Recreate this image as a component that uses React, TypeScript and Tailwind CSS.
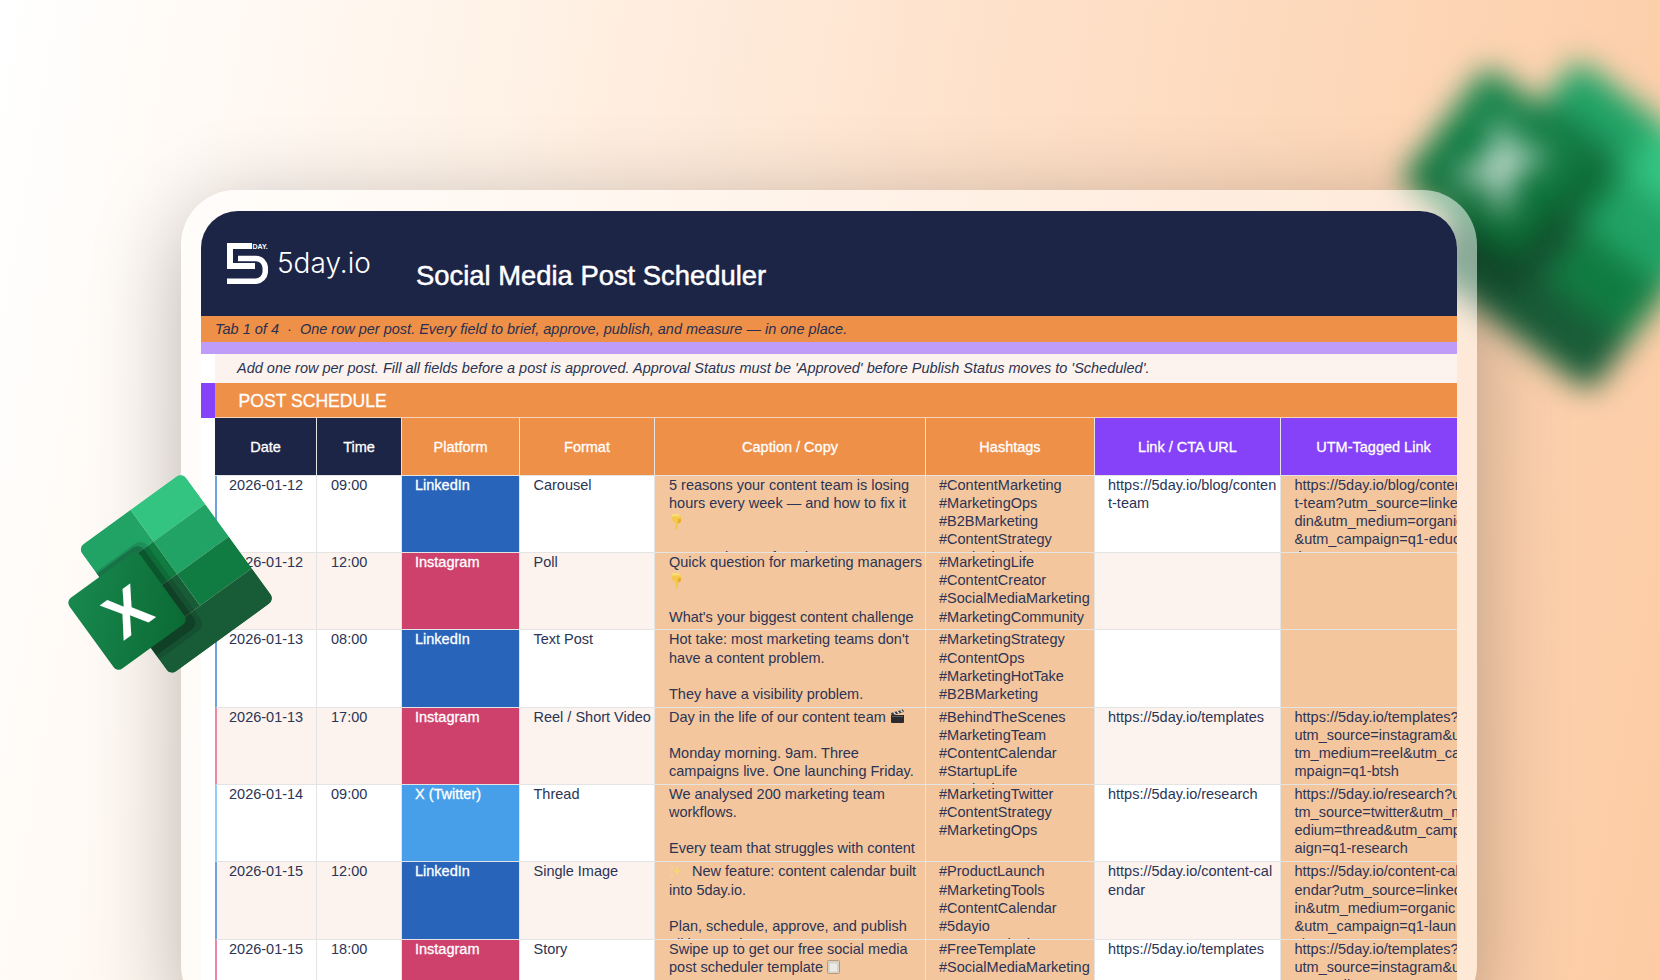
import type { ReactNode } from "react";

const Hand = () => (
  <svg viewBox="0 0 15 17" className="inline-block w-[15px] h-[17px] align-[-4px]">
    <path d="M2.500 1h8l1.500 3v4.500L10 10.500H8.800v4.700a1.200 1.200 0 0 1-2.400 0V10L3.500 8z" fill="#f4c84a" />
    <path d="M2.500 1h8l.5 2.500H3z" fill="#f9dc7c" />
    <path d="M8.800 10.500H10l2-2V6H9z" fill="#e5ab33" />
  </svg>
);

const Clapper = () => (
  <svg viewBox="0 0 15 14" className="inline-block w-[15px] h-[14px] align-[-1px]">
    <path d="M1 6h13v7a1 1 0 0 1-1 1H2a1 1 0 0 1-1-1z" fill="#2b2b2b" />
    <path d="M1 4l12-3.500.8 2.500L1.800 6.500z" fill="#3a3a3a" />
    <path d="M3.500 3.300l2 2M7 2.300l2 2M10.500 1.200l2 2" stroke="#e8e8e8" strokeWidth="1.300" />
    <path d="M2 7.500h11" stroke="#6b6b6b" strokeWidth="0.800" />
  </svg>
);

const Sparkles = () => (
  <svg viewBox="0 0 15 14" className="inline-block w-[15px] h-[14px] align-[-2px]">
    <path d="M8 2l1.300 3.700L13 7 9.300 8.300 8 12 6.700 8.300 3 7l3.700-1.300z" fill="#f7d96b" opacity="0.85" />
    <path d="M3 1l.6 1.400L5 3l-1.400.6L3 5l-.6-1.400L1 3l1.400-.6z" fill="#f9e08a" opacity="0.7" />
    <path d="M3 10l.5 1.500L5 12l-1.500.5L3 14l-.5-1.500L1 12l1.500-.5z" fill="#f9e08a" opacity="0.6" />
  </svg>
);

const Memo = () => (
  <svg viewBox="0 0 13 14" className="inline-block w-[13px] h-[14px] align-[-2px]">
    <rect x="0.500" y="0.500" width="12" height="13" rx="1" fill="#d9d2c6" stroke="#b49a78" />
    <path d="M3 3.500h7v8H3z" fill="#ecebe7" />
  </svg>
);

// the Excel mark, laid out in its own unrotated coordinates
function ExcelMark({ id }: { id: string }) {
  return (
    <>
      <defs>
        <clipPath id={`${id}-sheet`}>
          <rect width="125" height="153" rx="7" />
        </clipPath>
        <linearGradient id={`${id}-front`} x1="0" y1="0" x2="1" y2="1">
          <stop offset="0" stopColor="#18894f" />
          <stop offset="1" stopColor="#0b6a33" />
        </linearGradient>
      </defs>
      <g clipPath={`url(#${id}-sheet)`}>
        <rect width="63" height="38" fill="#21a366" />
        <rect x="63" width="62" height="38" fill="#33c481" />
        <rect y="38" width="63" height="39" fill="#107c41" />
        <rect x="63" y="38" width="62" height="39" fill="#21a366" />
        <rect y="77" width="63" height="38" fill="#185c37" />
        <rect x="63" y="77" width="62" height="38" fill="#107c41" />
        <rect y="115" width="125" height="38" fill="#185c37" />
        <rect x="-44" y="29" width="100" height="105" rx="9" fill="#000" opacity="0.12" />
        <rect x="-44" y="31" width="95" height="98" rx="8" fill="#000" opacity="0.2" />
      </g>
      <rect x="-40" y="35" width="85" height="85" rx="6" fill={`url(#${id}-front)`} />
      <text
        x="2.500"
        y="99"
        textAnchor="middle"
        fontSize="60"
        fontWeight="700"
        fontFamily="'Liberation Sans', sans-serif"
        fill="#fff"
      >
        X
      </text>
    </>
  );
}

function Logo() {
  return (
    <div className="relative w-[41px] h-[41px] shrink-0">
      <svg viewBox="0 0 41 41" className="w-[41px] h-[41px]" fill="none" stroke="#fff">
        <path d="M25 3H3V23H28" strokeWidth="6" />
        <path d="M11 15.500H29A9.500 9.500 0 0 1 38.300 25V28A10 10 0 0 1 28 38.300H0" strokeWidth="5.500" />
      </svg>
      <span className="absolute left-[25.500px] top-[-1px] text-[7px] leading-[9px] font-bold text-white">DAY.</span>
    </div>
  );
}

const COLS = "grid grid-cols-[102px_85px_118px_135px_271px_169px_186px_186px]";

const HEADERS = [
  { label: "Date", bg: "bg-[#1c2546]" },
  { label: "Time", bg: "bg-[#1c2546]" },
  { label: "Platform", bg: "bg-[#ef9049]" },
  { label: "Format", bg: "bg-[#ef9049]" },
  { label: "Caption / Copy", bg: "bg-[#ef9049]" },
  { label: "Hashtags", bg: "bg-[#ef9049]" },
  { label: "Link / CTA URL", bg: "bg-[#8642f8]" },
  { label: "UTM-Tagged Link", bg: "bg-[#8642f8]" },
];

const PLATFORMS = {
  LinkedIn: { cell: "bg-[#2864ba]", edge: "border-l-[#6fa1e0]" },
  Instagram: { cell: "bg-[#cf416d]", edge: "border-l-[#ec86a6]" },
  "X (Twitter)": { cell: "bg-[#489fe9]", edge: "border-l-[#8fcffa]" },
};

type Post = {
  date: string;
  time: string;
  platform: keyof typeof PLATFORMS;
  format: string;
  caption: ReactNode;
  tags: string;
  link: string;
  utm: string;
};

const POSTS: Post[] = [
  {
    date: "2026-01-12",
    time: "09:00",
    platform: "LinkedIn",
    format: "Carousel",
    caption: (
      <>
        {"5 reasons your content team is losing\nhours every week — and how to fix it\n"}
        <Hand />
        {"\n\nHere's what we found"}
      </>
    ),
    tags: "#ContentMarketing\n#MarketingOps\n#B2BMarketing\n#ContentStrategy\n#MarketingTips",
    link: "https://5day.io/blog/conten\nt-team",
    utm: "https://5day.io/blog/conten\nt-team?utm_source=linke\ndin&utm_medium=organic\n&utm_campaign=q1-educa\ntion",
  },
  {
    date: "2026-01-12",
    time: "12:00",
    platform: "Instagram",
    format: "Poll",
    caption: (
      <>
        {"Quick question for marketing managers\n"}
        <Hand />
        {"\n\nWhat's your biggest content challenge\nright now?"}
      </>
    ),
    tags: "#MarketingLife\n#ContentCreator\n#SocialMediaMarketing\n#MarketingCommunity",
    link: "",
    utm: "",
  },
  {
    date: "2026-01-13",
    time: "08:00",
    platform: "LinkedIn",
    format: "Text Post",
    caption: "Hot take: most marketing teams don't\nhave a content problem.\n\nThey have a visibility problem.",
    tags: "#MarketingStrategy\n#ContentOps\n#MarketingHotTake\n#B2BMarketing",
    link: "",
    utm: "",
  },
  {
    date: "2026-01-13",
    time: "17:00",
    platform: "Instagram",
    format: "Reel / Short Video",
    caption: (
      <>
        {"Day in the life of our content team "}
        <Clapper />
        {"\n\nMonday morning. 9am. Three\ncampaigns live. One launching Friday."}
      </>
    ),
    tags: "#BehindTheScenes\n#MarketingTeam\n#ContentCalendar\n#StartupLife\n#Marketing",
    link: "https://5day.io/templates",
    utm: "https://5day.io/templates?\nutm_source=instagram&u\ntm_medium=reel&utm_ca\nmpaign=q1-btsh",
  },
  {
    date: "2026-01-14",
    time: "09:00",
    platform: "X (Twitter)",
    format: "Thread",
    caption: "We analysed 200 marketing team\nworkflows.\n\nEvery team that struggles with content\nhas the same problem",
    tags: "#MarketingTwitter\n#ContentStrategy\n#MarketingOps",
    link: "https://5day.io/research",
    utm: "https://5day.io/research?u\ntm_source=twitter&utm_m\nedium=thread&utm_camp\naign=q1-research",
  },
  {
    date: "2026-01-15",
    time: "12:00",
    platform: "LinkedIn",
    format: "Single Image",
    caption: (
      <>
        <Sparkles />
        {"  New feature: content calendar built\ninto 5day.io.\n\nPlan, schedule, approve, and publish\nall in one place."}
      </>
    ),
    tags: "#ProductLaunch\n#MarketingTools\n#ContentCalendar\n#5dayio\n#SaaSMarketing",
    link: "https://5day.io/content-cal\nendar",
    utm: "https://5day.io/content-cal\nendar?utm_source=linked\nin&utm_medium=organic\n&utm_campaign=q1-laun\nch",
  },
  {
    date: "2026-01-15",
    time: "18:00",
    platform: "Instagram",
    format: "Story",
    caption: (
      <>
        {"Swipe up to get our free social media\npost scheduler template "}
        <Memo />
      </>
    ),
    tags: "#FreeTemplate\n#SocialMediaMarketing\n#ContentOps",
    link: "https://5day.io/templates",
    utm: "https://5day.io/templates?\nutm_source=instagram&u\ntm_medium=story&utm_ca\nmpaign=q1-lead",
  },
];

const cell = "overflow-hidden whitespace-pre border-r border-b border-[#e4e4e4]";
const peach = "bg-[#f4c69d]";

function PostRow({ post, shade }: { post: Post; shade: string }) {
  const p = PLATFORMS[post.platform];
  return (
    <div className={`${COLS} h-[77.33px] text-[14.5px] leading-[18.13px] text-[#2b3455]`}>
      <div className={`${cell} ${shade} pl-[12px] border-l-2 ${p.edge}`}>{post.date}</div>
      <div className={`${cell} ${shade} pl-[14px]`}>{post.time}</div>
      <div className={`${cell} ${p.cell} pl-[13px] text-white [-webkit-text-stroke:0.3px_white]`}>{post.platform}</div>
      <div className={`${cell} ${shade} pl-[13.5px]`}>{post.format}</div>
      <div className={`${cell} ${peach} pl-[14px]`}>{post.caption}</div>
      <div className={`${cell} ${peach} pl-[13px]`}>{post.tags}</div>
      <div className={`${cell} ${shade} pl-[13px]`}>{post.link}</div>
      <div className={`${cell} ${peach} pl-[13.5px]`}>{post.utm}</div>
    </div>
  );
}

export default function App() {
  return (
    <div className="relative w-[1660px] h-[980px] overflow-hidden font-['Liberation_Sans',Arial,sans-serif] bg-[linear-gradient(100deg,#ffffff_0%,#fff4ea_25%,#fee1ca_55%,#fccba3_100%)]">
      <svg className="absolute left-[1360px] top-[20px] w-[340px] h-[440px] blur-[15px]" viewBox="0 0 340 440">
        <g transform="translate(217 38) rotate(37) scale(1.7)">
          <ExcelMark id="back" />
        </g>
      </svg>

      <div className="relative z-10 ml-[181px] mt-[190px] w-[1296px] h-[830px] rounded-[55px] bg-white/50 pt-[21px] px-[20px] shadow-[0_20px_90px_rgba(0,0,0,0.28)]">
        <div className="h-full rounded-t-[37px] overflow-hidden bg-white">
          <header className="h-[104.5px] bg-[#1c2546] flex pl-[26px] pt-[32px]">
            <Logo />
            <span className="ml-[9px] mt-[2px] h-[40px] w-[139px] font-['Inter',sans-serif] font-light text-[28px] leading-[36px] text-white">
              5day.io
            </span>
            <h1 className="mt-[15px] text-[27.4px] leading-[36px] text-white [-webkit-text-stroke:0.5px_white]">
              Social Media Post Scheduler
            </h1>
          </header>
          <div className="h-[26.5px] bg-[#ef9049] pl-[14px] italic text-[14.5px] leading-[27px] text-[#2a2f4f] whitespace-pre">
            Tab 1 of 4  ·  One row per post. Every field to brief, approve, publish, and measure — in one place.
          </div>
          <div className="h-[12px] bg-[#bf9cf7]" />
          <div className="flex h-[28.5px] pl-[14px]">
            <div className="flex-1 bg-[#fcf3ee] pl-[22px] italic text-[14.5px] leading-[28px] text-[#2a3352]">
              Add one row per post. Fill all fields before a post is approved. Approval Status must be 'Approved' before Publish Status moves to 'Scheduled'.
            </div>
          </div>
          <div className="flex h-[35px]">
            <div className="w-[14px] bg-[#8642f8]" />
            <div className="flex-1 bg-[#ef9049] pl-[23.5px] text-[17.6px] leading-[36px] text-white border-b border-[#f6d3b8] [-webkit-text-stroke:0.3px_white]">
              POST SCHEDULE
            </div>
          </div>
          <div className="pl-[14px]">
            <div className={`${COLS} h-[58.3px]`}>
              {HEADERS.map((h) => (
                <div
                  key={h.label}
                  className={`${h.bg} flex items-center justify-center pt-[3px] border-r border-b border-[#e4e4e4] text-[14.5px] text-white [-webkit-text-stroke:0.3px_white]`}
                >
                  {h.label}
                </div>
              ))}
            </div>
            {POSTS.map((post, i) => (
              <PostRow key={post.date + post.time} post={post} shade={i % 2 ? "bg-[#fcf3ee]" : "bg-white"} />
            ))}
          </div>
        </div>
      </div>

      <svg className="absolute z-20 left-[60px] top-[460px] w-[235px] h-[225px]" viewBox="0 0 235 225">
        <g transform="translate(18 88) rotate(-36) scale(1.03)">
          <ExcelMark id="front" />
        </g>
      </svg>
    </div>
  );
}
